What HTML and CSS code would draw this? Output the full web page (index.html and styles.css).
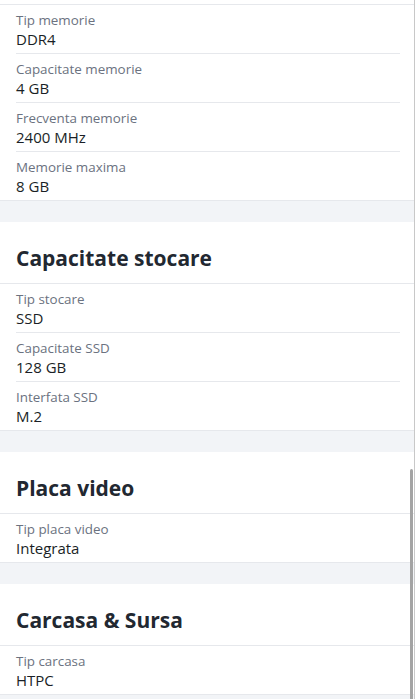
FILE: index.html
```html
<!DOCTYPE html>
<html lang="ro">
<head>
    <meta charset="UTF-8">
    <meta name="viewport" content="width=device-width, initial-scale=1.0">
    <title>Specificatii</title>
    <link rel="stylesheet" href="styles.css">
</head>
<body>

    <div class="page">
        <!-- Memorie (continuare) -->
        <div class="section section-top">
            <div class="row">
                <div class="label">Tip memorie</div>
                <div class="value">DDR4</div>
            </div>
            <div class="row">
                <div class="label">Capacitate memorie</div>
                <div class="value">4 GB</div>
            </div>
            <div class="row">
                <div class="label">Frecventa memorie</div>
                <div class="value">2400 MHz</div>
            </div>
            <div class="row">
                <div class="label">Memorie maxima</div>
                <div class="value">8 GB</div>
            </div>
        </div>

        <div class="gap"></div>

        <div class="section">
            <h2 class="heading">Capacitate stocare</h2>
            <div class="row">
                <div class="label">Tip stocare</div>
                <div class="value">SSD</div>
            </div>
            <div class="row">
                <div class="label">Capacitate SSD</div>
                <div class="value">128 GB</div>
            </div>
            <div class="row">
                <div class="label">Interfata SSD</div>
                <div class="value">M.2</div>
            </div>
        </div>

        <div class="gap"></div>

        <div class="section">
            <h2 class="heading">Placa video</h2>
            <div class="row">
                <div class="label">Tip placa video</div>
                <div class="value">Integrata</div>
            </div>
        </div>

        <div class="gap"></div>

        <div class="section">
            <h2 class="heading">Carcasa &amp; Sursa</h2>
            <div class="row">
                <div class="label">Tip carcasa</div>
                <div class="value">HTPC</div>
            </div>
        </div>

        <div class="gap"></div>

        <div class="scrollbar"></div>
    </div>

</body>
</html>
```

FILE: styles.css
```css
body {
    margin: 0;
    background-color: #ffffff;
    font-family: "Open Sans", "Noto Sans", Arial, sans-serif;
    height: 699px;
    overflow: hidden;
}
.page {
    position: relative;
    width: 415px;
    height: 699px;
    border-right: 1px solid #c8c8c8;
    box-sizing: border-box;
    padding-top: 4px;
    overflow: hidden;
}
.section {
    background-color: #fff;
    border-bottom: 1px solid #e6e8ec;
}
.section-top {
    border-top: 1px solid #e6e8ec;
}
.gap {
    height: 21px;
    background-color: #f2f4f7;
}
.heading {
    margin: 0;
    padding: 21px 16px 10px;
    font-size: 21px;
    line-height: 30px;
    font-weight: 700;
    color: #222831;
    border-bottom: 1px solid #e6e8ec;
}
.row {
    margin: 0 14px 0 16px;
    padding: 6px 0 4px;
    border-bottom: 1px solid #e6e8ec;
}
.row:last-child {
    border-bottom: none;
}
.label {
    font-size: 13.4px;
    line-height: 18px;
    color: #6b7280;
}
.value {
    font-size: 15px;
    line-height: 20px;
    font-weight: 500;
    color: #1a1f26;
}
/* bara de scroll */
.scrollbar {
    position: absolute;
    right: 1px;
    top: 469px;
    width: 3px;
    height: 240px;
    border-radius: 2px;
    background-color: #a3a3a3;
}
```
